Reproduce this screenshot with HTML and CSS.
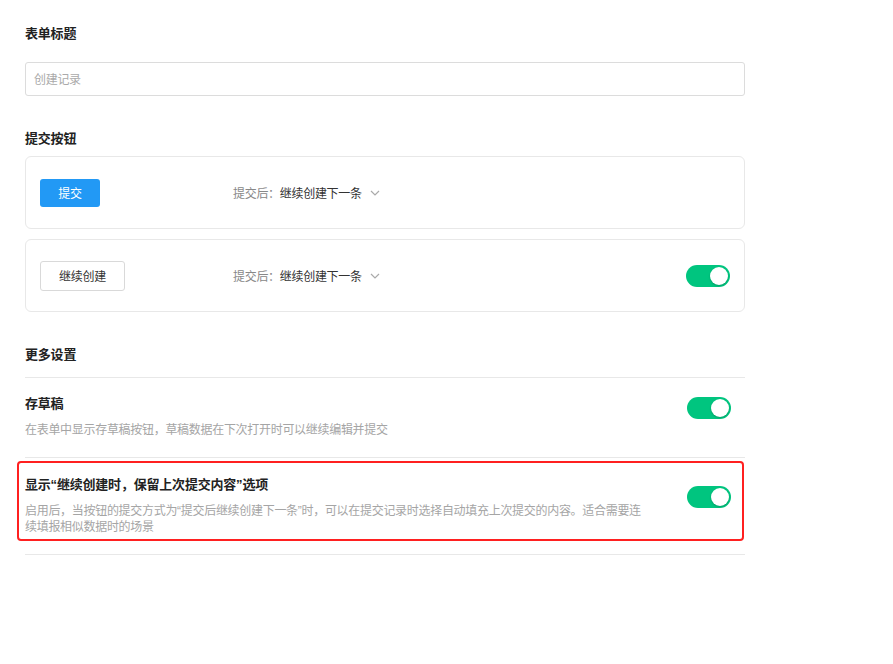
FILE: index.html
```html
<!DOCTYPE html>
<html lang="zh-CN">
<head>
<meta charset="utf-8">
<title>表单设置</title>
<link rel="stylesheet" href="styles.css">
</head>
<body>
<div class="page">
  <section class="section">
    <h3 class="section-title">表单标题</h3>
    <div class="input"><span class="placeholder">创建记录</span></div>
  </section>

  <section class="section">
    <h3 class="section-title">提交按钮</h3>
    <div class="card">
      <div class="card-btn-col"><span class="btn btn-primary">提交</span></div>
      <div class="after">
        <span class="after-label">提交后：</span><span class="after-value">继续创建下一条</span>
        <svg class="chevron" width="10" height="6" viewBox="0 0 10 6"><path d="M1 1 L5 5 L9 1" fill="none" stroke="#aaa" stroke-width="1.2"/></svg>
      </div>
    </div>
    <div class="card">
      <div class="card-btn-col"><span class="btn btn-default">继续创建</span></div>
      <div class="after">
        <span class="after-label">提交后：</span><span class="after-value">继续创建下一条</span>
        <svg class="chevron" width="10" height="6" viewBox="0 0 10 6"><path d="M1 1 L5 5 L9 1" fill="none" stroke="#aaa" stroke-width="1.2"/></svg>
      </div>
      <span class="switch"><span class="knob"></span></span>
    </div>
  </section>

  <section class="section">
    <h3 class="section-title more-title">更多设置</h3>
    <div class="setting">
      <div class="setting-text">
        <div class="setting-name">存草稿</div>
        <div class="setting-desc">在表单中显示存草稿按钮，草稿数据在下次打开时可以继续编辑并提交</div>
      </div>
      <span class="switch switch-row1"><span class="knob"></span></span>
    </div>
    <div class="setting setting-highlighted">
      <div class="setting-text">
        <div class="setting-name">显示“继续创建时，保留上次提交内容”选项</div>
        <div class="setting-desc">启用后，当按钮的提交方式为“提交后继续创建下一条”时，可以在提交记录时选择自动填充上次提交的内容。适合需要连续填报相似数据时的场景</div>
      </div>
      <span class="switch switch-row2"><span class="knob"></span></span>
      <span class="highlight"></span>
    </div>
  </section>
</div>
</body>
</html>
```

FILE: styles.css
```css
* { box-sizing: border-box; }
html, body {
  margin: 0;
  padding: 0;
  background: #fff;
}
body {
  font-family: "Liberation Sans", "Noto Sans CJK SC", sans-serif;
  color: #333;
  font-size: 12px;
  letter-spacing: -0.3px;
}
.page {
  width: 720px;
  margin-left: 25px;
  padding-top: 24px;
}
.section-title {
  margin: 0;
  font-size: 13px;
  line-height: 20px;
  font-weight: bold;
  color: #222;
  letter-spacing: -0.2px;
}
.section + .section { margin-top: 33px; }

.input {
  margin-top: 18px;
  height: 34px;
  border: 1px solid #dcdcdc;
  border-radius: 3px;
  display: flex;
  align-items: center;
  padding: 0 8px 2px;
}
.placeholder { color: #aaa; font-size: 12px; }

.section-title + .card { margin-top: 7px; }
.card {
  height: 73px;
  border: 1px solid #e8e8e8;
  border-radius: 6px;
  padding: 0 14px;
  display: flex;
  align-items: center;
}
.card + .card { margin-top: 10px; }
.card-btn-col { width: 193px; flex: none; display: flex; align-items: center; }
.btn {
  display: inline-flex;
  align-items: center;
  justify-content: center;
  height: 28px;
  border-radius: 3px;
  font-size: 12px;
}
.btn-primary { width: 60px; background: #2299f5; color: #fff; }
.btn-default { width: 85px; height: 30px; border: 1px solid #d9d9d9; background: #fff; color: #333; }
.after { display: flex; align-items: center; flex: 1; }
.after-label { color: #888; }
.after-value { color: #333; }
.chevron { margin-left: 8px; }

.switch {
  flex: none;
  position: relative;
  width: 44px;
  height: 22px;
  border-radius: 11px;
  background: #00c57f;
  margin-left: auto;
}
.knob {
  position: absolute;
  right: 2px;
  top: 2px;
  width: 18px;
  height: 18px;
  border-radius: 50%;
  background: #fff;
  box-shadow: 0 1px 2px rgba(0,0,0,0.2);
}

.more-title {
  padding-bottom: 12px;
  border-bottom: 1px solid #e8e8e8;
}
.setting {
  position: relative;
  display: flex;
  align-items: flex-start;
  padding: 16px 14px 18px 0;
  border-bottom: 1px solid #e8e8e8;
}
.setting-text { width: 622px; flex: none; }
.setting-name {
  font-size: 13px;
  line-height: 20px;
  font-weight: bold;
  color: #222;
  letter-spacing: -0.2px;
}
.setting-desc {
  margin-top: 8px;
  font-size: 12px;
  line-height: 16.5px;
  color: #a5a5a5;
}
.switch-row1 { margin-top: 3px; }
.setting-highlighted { padding-top: 17px; }
.switch-row2 { margin-top: 11px; }
.highlight {
  position: absolute;
  left: -8px;
  right: 1px;
  top: 3px;
  height: 80px;
  border: 2px solid #ff2020;
  border-radius: 4px;
  pointer-events: none;
}
```
